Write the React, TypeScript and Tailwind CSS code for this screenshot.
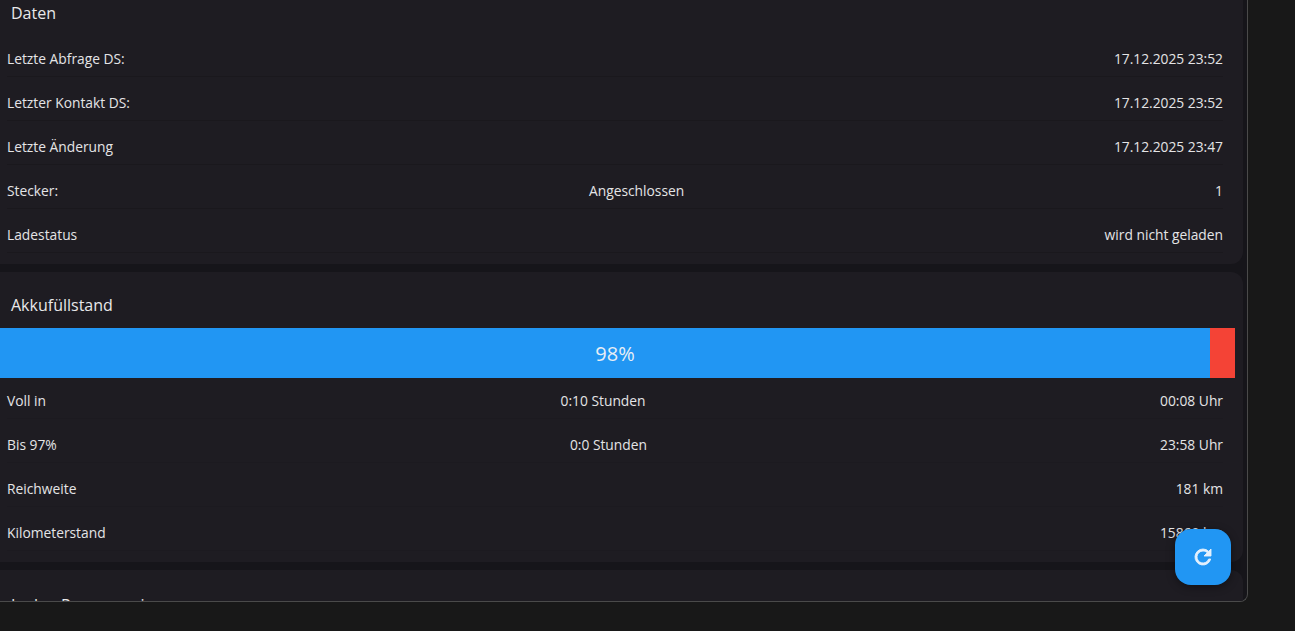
import { ReactNode } from 'react';

type RowProps = {
  label: string;
  middle?: string;
  value: string;
  lineClass?: string;
};

const Row = ({ label, middle, value, lineClass = 'border-[#1a181d]' }: RowProps) => (
  <div className={`mt-[7px] flex h-[37px] items-center justify-between border-b pt-[1px] text-[13.8px] leading-5 text-[#e4e4e6] ${lineClass}`}>
    <span>{label}</span>
    {middle && <span>{middle}</span>}
    <span>{value}</span>
  </div>
);

const Card = ({ title, titleClass = 'pt-[10px]', children }: { title: string; titleClass?: string; children?: ReactNode }) => (
  <section className="-ml-[13px] rounded-xl bg-[#1e1c22] pr-5 pb-[11px] pl-5">
    <h2 className={`flex h-14 items-center pl-[4px] text-[16px] text-[#e8e8ea] ${titleClass}`}>{title}</h2>
    {children}
  </section>
);

const App = () => {
  return (
    <div className="h-[631px] w-[1295px] overflow-hidden bg-[#181818] font-['Open_Sans','Noto_Sans',sans-serif]">
      <div className="relative h-[602px] w-[1248px] overflow-hidden rounded-br-lg border-r border-b border-[#4a4a4a] bg-[#16151a]">
        <div className="-mt-5 flex w-[1243px] flex-col gap-2">
          <Card title="Daten">
            <div className="-mt-[3px]">
              <Row label="Letzte Abfrage DS:" value="17.12.2025 23:52" />
              <Row label="Letzter Kontakt DS:" value="17.12.2025 23:52" />
              <Row label="Letzte Änderung" value="17.12.2025 23:47" />
              <Row label="Stecker:" middle="Angeschlossen" value="1" />
              <Row label="Ladestatus" value="wird nicht geladen" />
            </div>
          </Card>
          <Card title="Akkufüllstand">
            <div className="-mx-3 flex h-[50px] items-center justify-center bg-[linear-gradient(to_right,#2196f3_0,#2196f3_98%,#f44336_98%,#f44336_100%)] pt-[2px] text-[20px] text-[#e8eef5]">
              98%
            </div>
            <div className="-mt-[3px]">
              <Row label="Voll in" middle="0:10 Stunden" value="00:08 Uhr" lineClass="border-[#1c1a20]" />
              <Row label="Bis 97%" middle="0:0 Stunden" value="23:58 Uhr" lineClass="border-[#1c1a20]" />
              <Row label="Reichweite" value="181 km" lineClass="border-[#1c1a20]" />
              <Row label="Kilometerstand" value="15869 km" lineClass="border-[#1c1a20]" />
            </div>
          </Card>
          <Card title="Laden Programmieren" titleClass="pt-[13px]" />
        </div>
        <button className="absolute top-[529px] left-[1175px] flex h-14 w-14 items-center justify-center rounded-2xl bg-[#2196f3] shadow-[0_2px_8px_rgba(0,0,0,0.4)]">
          <svg viewBox="0 0 24 24" className="h-6 w-6 text-[#e3f0fd]" fill="currentColor" stroke="currentColor" strokeWidth="0.9">
            <path d="M17.65 6.35A7.96 7.96 0 0 0 12 4a8 8 0 1 0 7.73 10h-2.08A6 6 0 1 1 12 6c1.66 0 3.14.69 4.22 1.78L13 11h7V4l-2.35 2.35z" />
          </svg>
        </button>
      </div>
    </div>
  );
};

export default App;
